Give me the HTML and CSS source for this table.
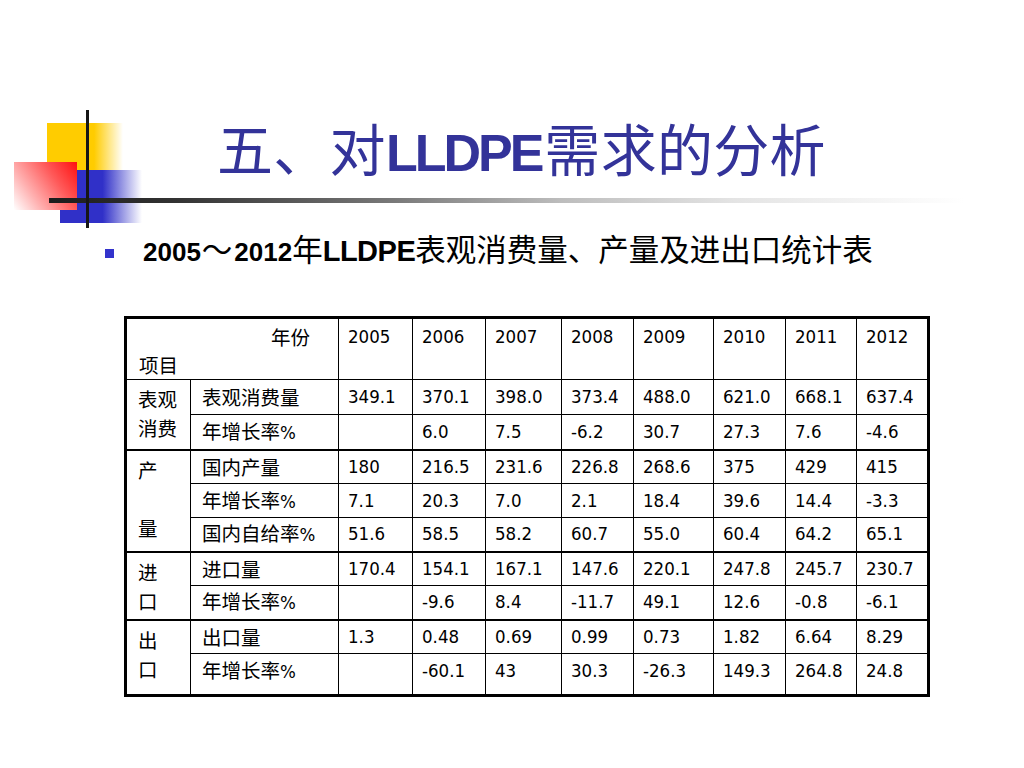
FILE: index.html
```html
<!DOCTYPE html>
<html lang="zh-CN">
<head>
<meta charset="utf-8">
<title>五、对LLDPE需求的分析</title>
<link rel="stylesheet" href="styles.css">
</head>
<body>
<div class="slide">
  <div class="logo" aria-hidden="true">
    <div class="sq yellow"></div>
    <div class="sq blue"></div>
    <div class="sq red"></div>
    <div class="vline"></div>
  </div>
  <header class="head">
    <h1 class="title">五、对<span class="lat">LLDPE</span>需求的分析</h1>
    <div class="rule"></div>
  </header>
  <p class="sub"><span class="bullet"></span><span class="subtext"><b>2005</b><span class="tilde">～</span><b>2012</b>年<b class="lat">LLDPE</b>表观消费量、产量及进出口统计表</span></p>
  <table class="data">
    <colgroup>
      <col class="c1"><col class="c2">
      <col class="y05"><col class="y06"><col class="y07"><col class="y08">
      <col class="y09"><col class="y10"><col class="y11"><col class="y12">
    </colgroup>
    <tr class="hrow">
      <td colspan="2" class="corner zh"><div class="r">年份</div><div class="l">项目</div></td>
      <td class="yr">2005</td><td class="yr">2006</td><td class="yr">2007</td><td class="yr">2008</td>
      <td class="yr">2009</td><td class="yr">2010</td><td class="yr">2011</td><td class="yr">2012</td>
    </tr>
    <tr class="r35">
      <td rowspan="2" class="grp zh">表观<br>消费</td>
      <td class="zh">表观消费量</td><td>349.1</td><td>370.1</td><td>398.0</td><td>373.4</td><td>488.0</td><td>621.0</td><td>668.1</td><td>637.4</td>
    </tr>
    <tr class="r35">
      <td class="zh">年增长率<span class="pc">%</span></td><td></td><td>6.0</td><td>7.5</td><td>-6.2</td><td>30.7</td><td>27.3</td><td>7.6</td><td>-4.6</td>
    </tr>
    <tr class="r34 sec">
      <td rowspan="3" class="grp zh">产<br><br>量</td>
      <td class="zh">国内产量</td><td>180</td><td>216.5</td><td>231.6</td><td>226.8</td><td>268.6</td><td>375</td><td>429</td><td>415</td>
    </tr>
    <tr class="r34">
      <td class="zh">年增长率<span class="pc">%</span></td><td>7.1</td><td>20.3</td><td>7.0</td><td>2.1</td><td>18.4</td><td>39.6</td><td>14.4</td><td>-3.3</td>
    </tr>
    <tr class="r34">
      <td class="zh">国内自给率<span class="pc">%</span></td><td>51.6</td><td>58.5</td><td>58.2</td><td>60.7</td><td>55.0</td><td>60.4</td><td>64.2</td><td>65.1</td>
    </tr>
    <tr class="r34 sec">
      <td rowspan="2" class="grp zh">进<br>口</td>
      <td class="zh">进口量</td><td>170.4</td><td>154.1</td><td>167.1</td><td>147.6</td><td>220.1</td><td>247.8</td><td>245.7</td><td>230.7</td>
    </tr>
    <tr class="r34">
      <td class="zh">年增长率<span class="pc">%</span></td><td></td><td>-9.6</td><td>8.4</td><td>-11.7</td><td>49.1</td><td>12.6</td><td>-0.8</td><td>-6.1</td>
    </tr>
    <tr class="r34 sec">
      <td rowspan="2" class="grp zh">出<br>口</td>
      <td class="zh">出口量</td><td>1.3</td><td>0.48</td><td>0.69</td><td>0.99</td><td>0.73</td><td>1.82</td><td>6.64</td><td>8.29</td>
    </tr>
    <tr class="r42">
      <td class="zh">年增长率<span class="pc">%</span></td><td></td><td>-60.1</td><td>43</td><td>30.3</td><td>-26.3</td><td>149.3</td><td>264.8</td><td>24.8</td>
    </tr>
  </table>
</div>
</body>
</html>
```

FILE: styles.css
```css
html, body {
  margin: 0;
  padding: 0;
  background: #ffffff;
}

.slide {
  position: relative;
  width: 1024px;
  height: 768px;
  overflow: hidden;
  background: #ffffff;
  font-family: "Noto Sans CJK SC", "Liberation Sans", sans-serif;
  color: #000;
}

/* decorative logo, overlapping the title rule */
.logo .sq,
.logo .vline {
  position: absolute;
}
.logo .yellow {
  left: 47px;
  top: 123px;
  width: 76px;
  height: 47px;
  background: linear-gradient(to right, #ffcc00 0%, #ffcc00 62%, rgba(255, 204, 0, 0) 100%);
}
.logo .blue {
  left: 60px;
  top: 170px;
  width: 82px;
  height: 53px;
  background: linear-gradient(to right, #3030c8 0%, #3030c8 52%, rgba(48, 48, 200, 0) 100%);
}
.logo .red {
  left: 14px;
  top: 162px;
  width: 63px;
  height: 48px;
  background: linear-gradient(235deg, #ff1010 0%, #ff5a5a 35%, #ffb0b0 70%, #ffffff 100%);
}
.logo .vline {
  left: 86px;
  top: 110px;
  width: 3px;
  height: 118px;
  background: #161616;
  z-index: 3;
}

.head {
  padding-top: 115px;
}

.title {
  margin: 0 0 0 217px;
  height: 64px;
  font-size: 56px;
  line-height: 64px;
  font-weight: normal;
  color: #333399;
  white-space: nowrap;
  letter-spacing: 0.3px;
}
.title .lat {
  font-family: "Liberation Sans", sans-serif;
  font-weight: bold;
  font-size: 52px;
  letter-spacing: -3px;
  line-height: 1;
  margin-right: 3px;
}

.rule {
  position: relative;
  z-index: 2;
  margin: 19px 0 0 49px;
  width: 915px;
  height: 5px;
  background: linear-gradient(to right, #1c1c1c 0%, #333333 14%, #7a7a7a 38%, #bdbdbd 56%, #e4e4e4 75%, #ffffff 100%);
}

.sub {
  display: flex;
  margin: 27px 0 0 105px;
  height: 36px;
  font-size: 30.5px;
  line-height: 36px;
  white-space: nowrap;
}
.bullet {
  flex: none;
  width: 9px;
  height: 9px;
  margin-top: 19px;
  margin-right: 29px;
  background: #3333cc;
}
.subtext b {
  font-family: "Liberation Sans", sans-serif;
  font-weight: bold;
  font-size: 26px;
}
.subtext b.lat {
  font-size: 29px;
  letter-spacing: -0.5px;
}
.tilde {
  margin: 0 2px 0 1px;
}

.data {
  margin: 50px 0 0 124px;
  border-collapse: collapse;
  table-layout: fixed;
  width: 806px;
  border: 3px solid #000;
  font-family: "DejaVu Sans Condensed", "Noto Sans CJK SC", sans-serif;
  font-size: 18.5px;
}
.data col.c1 { width: 65px; }
.data col.c2 { width: 148px; }
.data col.y05 { width: 74px; }
.data col.y06 { width: 73px; }
.data col.y07 { width: 76px; }
.data col.y08 { width: 72px; }
.data col.y09 { width: 80px; }
.data col.y10 { width: 72px; }
.data col.y11 { width: 71px; }
.data col.y12 { width: 72px; }

.data td {
  border: 1.5px solid #000;
  padding: 0 0 0 9px;
  vertical-align: middle;
  white-space: nowrap;
  line-height: 24px;
}
.data td.zh {
  font-family: "Noto Sans CJK SC", sans-serif;
  font-size: 19.5px;
  padding-left: 11px;
}
.data .pc {
  font-family: "DejaVu Sans Condensed", sans-serif;
  font-size: 18.5px;
}
.data .hrow { height: 62px; }
.data .r35 { height: 35px; }
.data .r34 { height: 34px; }
.data .r42 { height: 42px; }
.data .sec td { border-top-width: 2px; }

.data td.corner {
  vertical-align: top;
  padding: 4px 0 0 0;
  line-height: 28px;
}
.corner .r {
  text-align: right;
  padding-right: 28px;
}
.corner .l {
  padding-left: 12px;
}
.data td.yr {
  vertical-align: top;
  padding-top: 4px;
  line-height: 28px;
}
.data td.grp {
  vertical-align: top;
  padding: 4px 0 0 11px;
  line-height: 29px;
}
.data .r42 td {
  padding-bottom: 6px;
}
```
